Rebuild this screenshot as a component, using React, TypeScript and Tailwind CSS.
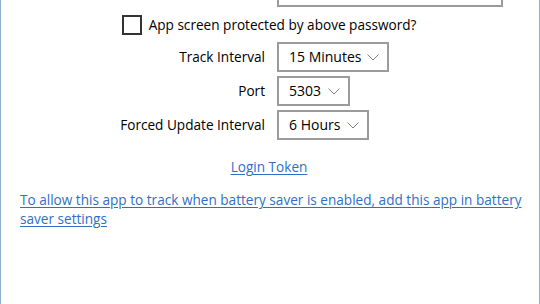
import React from "react";

function Chevron() {
  return (
    <svg width="12" height="7" viewBox="0 0 12 7" fill="none" className="shrink-0">
      <path d="M0.5 0.5 L6 6 L11.5 0.5" stroke="#808080" strokeWidth="1" />
    </svg>
  );
}

function Combo({ value, width }: { value: string; width: string }) {
  return (
    <div className={`flex h-[30px] items-center justify-between border-2 border-[#9b9b9b] bg-white pl-[10px] pr-[8px] ${width}`}>
      <span className="text-[14px] leading-none text-black">{value}</span>
      <Chevron />
    </div>
  );
}

export default function App() {
  return (
    <div
      className="flex h-[304px] w-[540px] flex-col overflow-hidden border-x border-[#8db0d0] bg-white text-black"
      style={{ fontFamily: '"Open Sans", "Noto Sans", sans-serif' }}
    >
      <div className="ml-[276px] h-[7px] w-[226px] border-x-2 border-b-2 border-[#9b9b9b]" />
      <div className="mt-[8px] flex items-center justify-center gap-[7px] pr-[2px]">
        <div className="h-[20px] w-[20px] border-2 border-[#333]" />
        <span className="text-[13.6px] leading-[20px]">App screen protected by above password?</span>
      </div>
      <div className="mt-[7px] ml-[19px] grid grid-cols-[245px_auto] items-center gap-x-3 gap-y-[4px] justify-start">
        <span className="text-right text-[13.6px]">Track Interval</span>
        <Combo value="15 Minutes" width="w-[112px]" />
        <span className="text-right text-[13.6px]">Port</span>
        <Combo value="5303" width="w-[73px]" />
        <span className="text-right text-[13.6px]">Forced Update Interval</span>
        <Combo value="6 Hours" width="w-[92px]" />
      </div>
      <div className="mt-[17px] flex justify-center pr-[2px]">
        <span className="text-[13.6px] leading-[20px] text-[#2f6fc4] underline underline-offset-2">Login Token</span>
      </div>
      <div className="mt-[13px] pl-[19px] pr-[6px] text-[13.6px] leading-[19px]">
        <span className="text-[#2f6fc4] underline underline-offset-2">
          To allow this app to track when battery saver is enabled, add this app in battery saver settings
        </span>
      </div>
    </div>
  );
}
